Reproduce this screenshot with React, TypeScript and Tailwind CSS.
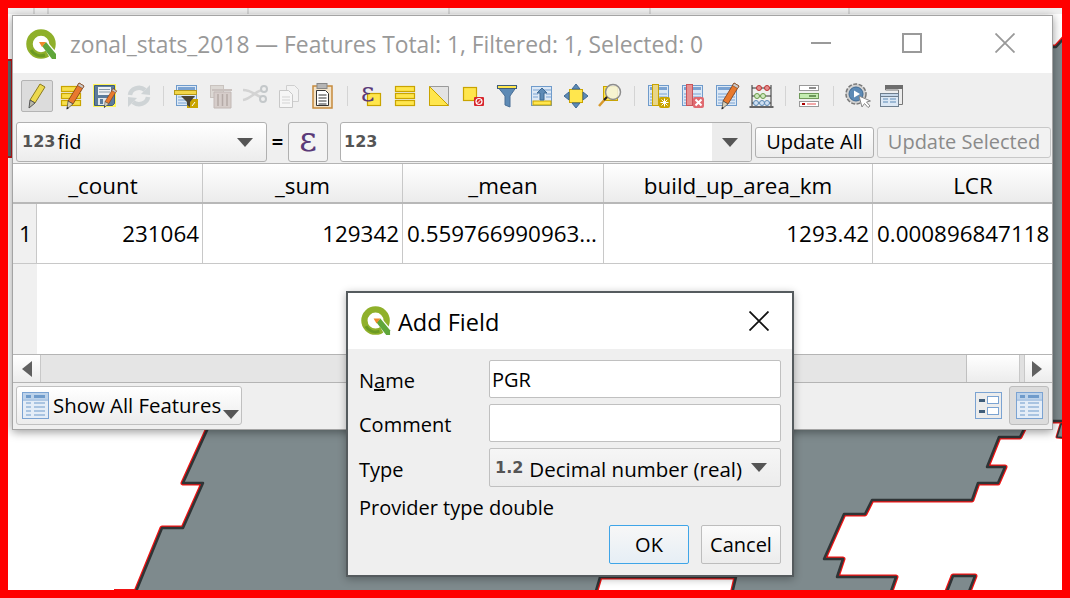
import React from "react";

const FONT = "font-['Open_Sans','Noto_Sans',sans-serif]";

function Logo({ size = 32 }: { size?: number }) {
  return (
    <svg width={size} height={size} viewBox="0 0 32 32" className="shrink-0">
      <circle cx="15" cy="15" r="11.500" fill="none" stroke="#8fb02a" strokeWidth="6.500" />
      <path d="M5 21a11.500 11.500 0 0 0 14 5" fill="none" stroke="#6b9a22" strokeWidth="3" />
      <path d="M15 13l4-3 12 14v7h-6z" fill="#fff" />
      <path d="M16 17l4-4 10 12v5h-4z" fill="#5fa63a" />
      <path d="M13 13l7 0-4 5z" fill="#ef8a2b" />
    </svg>
  );
}

function Pencil({ dx = 0, dy = 0, body = "#e8792e", line = "#7a3a12" }: { dx?: number; dy?: number; body?: string; line?: string }) {
  return (
    <g transform={`translate(${dx} ${dy})`}>
      <path d="M18 1l5 3-11 18-5-3z" fill={body} stroke={line} strokeWidth=".8" />
      <path d="M18 1l5 3-1.500 2.500-5-3z" fill="#c9c9c9" stroke={line} strokeWidth=".6" />
      <path d="M7 19l5 3-6 5z" fill="#d9d0b8" stroke="#444" strokeWidth=".7" />
      <path d="M6 25l2 1-2.500 1.500z" fill="#222" />
    </g>
  );
}

const TableBase = ({ x = 3, y = 4, w = 20, h = 20 }: { x?: number; y?: number; w?: number; h?: number }) => (
  <g>
    <rect x={x + 0.5} y={y + 0.5} width={w} height={h} fill="#dce8f5" stroke="#6f9bcb" />
    <rect x={x + 2} y={y + 2} width={w - 3} height="3" fill="#7ba3d2" />
    <path d={`M${x + 2} ${y + 9}h${w - 3}M${x + 2} ${y + 12}h${w - 3}M${x + 2} ${y + 15}h${w - 3}M${x + 2} ${y + 18}h${w - 3}`} stroke="#7ba3d2" />
  </g>
);

const I = ({ children }: { children: React.ReactNode }) => (
  <svg width="28" height="28" viewBox="0 0 28 28" className="overflow-visible">{children}</svg>
);

const icons: Record<string, React.ReactNode> = {
  pencil: (
    <I>
      <path d="M17 2l5 3-10 16-5-3z" fill="#ecd94f" stroke="#8a7a20" />
      <path d="M7 18l5 3-6 5z" fill="#b9b9a8" stroke="#555" />
    </I>
  ),
  editLayer: (
    <I>
      <g fill="#f7df4a" stroke="#c9a400" strokeWidth="1.200">
        <rect x="4.500" y="4.500" width="19" height="5" />
        <rect x="4.500" y="11.500" width="19" height="5" />
        <rect x="4.500" y="18.500" width="19" height="5" />
      </g>
      <Pencil dx={4} dy={0} />
    </I>
  ),
  save: (
    <I>
      <rect x="2" y="2" width="23" height="23" fill="#fff45a" />
      <path d="M3.500 3.500h20v18l-2 2h-18z" fill="#5c7c9c" stroke="#3f5d7a" />
      <rect x="7" y="5" width="13" height="8" fill="#eef1f4" />
      <path d="M8 7.500h11M8 10h11" stroke="#8a9aa8" />
      <rect x="7" y="16" width="10" height="7" fill="#dfe5ea" />
      <rect x="9" y="17" width="3" height="5" fill="#5c7c9c" />
      <g transform="translate(9 6) scale(.72)"><Pencil /></g>
    </I>
  ),
  reload: (
    <I>
      <path d="M5 13a9 8 0 0 1 15-5" fill="none" stroke="#cfd4d6" strokeWidth="4.500" />
      <path d="M16 12l9 1V3z" fill="#cfd4d6" />
      <path d="M23 15a9 8 0 0 1-15 5" fill="none" stroke="#cfd4d6" strokeWidth="4.500" />
      <path d="M12 16l-9-1v10z" fill="#cfd4d6" />
    </I>
  ),
  selectFilter: (
    <I>
      <TableBase x={3} y={3} w={20} h={20} />
      <rect x="1.500" y="8.500" width="22" height="4" fill="#f2d64a" stroke="#b59a1a" />
      <rect x="14" y="17" width="11" height="9" fill="#c9a400" />
      <path d="M8 14h14l-5 6v5l-3-2v-3z" fill="#4a4436" />
      <path d="M19 24l3-4" stroke="#fff" />
    </I>
  ),
  trash: (
    <I>
      <rect x="3.500" y="3.500" width="13" height="12" fill="#dcd8d4" stroke="#c9c3bf" />
      <path d="M5 8h20" stroke="#c9c1be" strokeWidth="2" />
      <path d="M7 10h17v16H7z" fill="#d6cdca" stroke="#c2b8b5" />
      <path d="M11 12v12M15.500 12v12M20 12v12" stroke="#b5aaa7" strokeWidth="1.500" />
    </I>
  ),
  scissors: (
    <I>
      <path d="M2 8c8 0 14 6 18 7M2 18c7-1 13-9 19-10" fill="none" stroke="#d3d3d3" strokeWidth="2.500" />
      <circle cx="23" cy="7" r="3" fill="none" stroke="#c4c8ca" strokeWidth="2" />
      <circle cx="22" cy="17" r="3" fill="none" stroke="#c4c8ca" strokeWidth="2" />
    </I>
  ),
  copy: (
    <I>
      <path d="M11.500 3.500h8l4 4v12h-12z" fill="#f2f2f2" stroke="#cfcfcf" />
      <path d="M4.500 8.500h9l4 4v13h-13z" fill="#f6f6f6" stroke="#c8c8c8" />
      <path d="M7 15h8M7 18h8M7 21h8" stroke="#d3d3d3" />
    </I>
  ),
  paste: (
    <I>
      <rect x="4" y="4" width="19" height="22" fill="#f3e3c8" stroke="#c68a3c" strokeWidth="1.500" />
      <path d="M7.500 8.500h9l3 3v12h-12z" fill="#fff" stroke="#333" />
      <rect x="8" y="1.500" width="10" height="5" fill="#b5b5b5" stroke="#888" />
      <path d="M9.500 13h8M9.500 16h8M9.500 19h8M9.500 22h8" stroke="#333" />
    </I>
  ),
  exprSelect: (
    <I>
      <rect x="9.500" y="11.500" width="13" height="12" fill="#ffe64d" stroke="#c9a400" strokeWidth="1.200" />
      <text x="3" y="19" fontSize="26" fill="#5a3a78" fontFamily="DejaVu Serif">ε</text>
    </I>
  ),
  selectAll: (
    <I>
      <g fill="#ffe64d" stroke="#c9a400" strokeWidth="1.200">
        <rect x="3.500" y="4.500" width="19" height="5" />
        <rect x="3.500" y="11.500" width="19" height="5" />
        <rect x="3.500" y="18.500" width="19" height="5" />
      </g>
    </I>
  ),
  invert: (
    <I>
      <path d="M3.500 4.500h19v19h-19z" fill="#e3e3e3" stroke="#9a9a9a" />
      <path d="M3.500 4.500l19 19h-19z" fill="#ffe64d" stroke="#c9a400" />
    </I>
  ),
  deselect: (
    <I>
      <rect x="3.500" y="5.500" width="13" height="13" fill="#ffe64d" stroke="#c9a400" strokeWidth="1.200" />
      <rect x="14" y="15" width="10" height="9" rx="1" fill="#d8262c" />
      <circle cx="19" cy="19.500" r="3" fill="none" stroke="#fff" strokeWidth="1.200" />
      <path d="M17 21.500l4-4" stroke="#fff" />
    </I>
  ),
  filter: (
    <I>
      <path d="M3 4h20l-7 10v11l-5-2v-9z" fill="#5d8ab5" stroke="#4a6f96" />
      <rect x="3.500" y="3.500" width="19" height="3" fill="#ffe64d" stroke="#3f5d7a" />
    </I>
  ),
  moveTop: (
    <I>
      <rect x="3.500" y="4.500" width="20" height="19" fill="#dce8f5" stroke="#6f9bcb" />
      <path d="M5 8h18M5 12h5M18 12h5M5 15h5M18 15h5" stroke="#7ba3d2" />
      <rect x="5" y="19" width="18" height="4" fill="#ffe64d" stroke="#c9a400" />
      <path d="M14 6l5 5h-3v7h-4v-7H9z" fill="#5d8ab5" stroke="#3f6a94" />
    </I>
  ),
  pan: (
    <I>
      <rect x="7.500" y="7.500" width="13" height="13" fill="#ffe64d" stroke="#c9a400" />
      <path d="M14 2l4 5h-8zM14 26l4-5h-8zM2 14l5-4v8zM26 14l-5-4v8z" fill="#5d8ab5" stroke="#3f6a94" />
    </I>
  ),
  zoomSel: (
    <I>
      <rect x="7.500" y="4.500" width="14" height="14" fill="#ffe64d" stroke="#c9a400" />
      <circle cx="17" cy="10" r="7.500" fill="#f4f4e8" fillOpacity=".85" stroke="#8d8d8d" strokeWidth="1.500" />
      <path d="M11 15l-8 9" stroke="#d89a2a" strokeWidth="2.500" />
      <path d="M11 15l-3 3" stroke="#222" strokeWidth="2" />
    </I>
  ),
  newField: (
    <I>
      <TableBase x={3} y={3} w={20} h={20} />
      <rect x="7.500" y="2.500" width="6" height="21" fill="#e8d688" stroke="#c9a400" />
      <rect x="14" y="15" width="11" height="11" rx="2" fill="#c9a400" />
      <path d="M19.500 16.500v8M15.500 20.500h8M16.500 17.500l6 6M22.500 17.500l-6 6" stroke="#fff" />
    </I>
  ),
  delField: (
    <I>
      <TableBase x={3} y={3} w={20} h={20} />
      <rect x="7.500" y="2.500" width="6" height="21" fill="#e78f90" stroke="#c9555a" />
      <rect x="14" y="15" width="11" height="11" rx="2" fill="#e06a70" />
      <path d="M16.500 17.500l6 6M22.500 17.500l-6 6" stroke="#fff" strokeWidth="2" />
    </I>
  ),
  editField: (
    <I>
      <TableBase x={3} y={3} w={20} h={20} />
      <g transform="translate(3 0)"><Pencil dx={0} dy={0} /></g>
    </I>
  ),
  abacus: (
    <I>
      <path d="M5 3v21M24 3v21" stroke="#333" />
      <path d="M5 6h19M5 14h19M5 21h19" stroke="#333" />
      <rect x="2.500" y="24" width="24" height="2" fill="#666" />
      <g fill="#e58d8d" stroke="#b33"><circle cx="12" cy="6" r="2.500" /><circle cx="20" cy="6" r="2.500" /></g>
      <g fill="#cfe8c0" stroke="#6a9a4a"><circle cx="10" cy="14" r="2.500" /><circle cx="16" cy="14" r="2.500" /></g>
      <g fill="#cfe0f2" stroke="#5d8ab5"><circle cx="9" cy="21" r="2.500" /><circle cx="15" cy="21" r="2.500" /><circle cx="20" cy="21" r="2.500" /></g>
    </I>
  ),
  rules: (
    <I>
      <rect x="4.500" y="3.500" width="19" height="5" fill="#fff" stroke="#999" />
      <path d="M14 6h7" stroke="#666" strokeWidth="1.500" />
      <rect x="4.500" y="11.500" width="19" height="5" fill="#c3ecb0" stroke="#6f9a5a" />
      <path d="M14 14h7" stroke="#4f7a3f" strokeWidth="1.500" />
      <rect x="4.500" y="19.500" width="19" height="5" fill="#fff" stroke="#999" />
      <rect x="7" y="21" width="3" height="2" fill="#a00" />
      <rect x="12" y="21" width="9" height="2" fill="#f2a8a8" />
    </I>
  ),
  action: (
    <I>
      <circle cx="13" cy="12" r="10" fill="#d0d0d0" stroke="#777" strokeWidth="1.500" strokeDasharray="4 1.500" />
      <circle cx="13" cy="12" r="7" fill="#5d8ab5" stroke="#3f6a94" />
      <path d="M11 8.500l6 3.500-6 3.500z" fill="#fff" />
      <path d="M16 14l3 11 2.500-3.500 3.500 4 2-1.500-3.500-4 4-1z" fill="#fff" stroke="#888" />
    </I>
  ),
  dock: (
    <I>
      <path d="M8.500 3.500h17v19h-4V8h-13z" fill="#ededed" stroke="#777" />
      <rect x="8" y="3" width="18" height="4" fill="#6d6d6d" />
      <rect x="3.500" y="11.500" width="18" height="13" fill="#dce8f5" stroke="#6f7f8f" />
      <rect x="3.500" y="11.500" width="18" height="3" fill="#c5d7ea" stroke="#6f7f8f" />
      <path d="M6 17h5M13 17h6M6 20h5M13 20h6" stroke="#5d8ab5" />
    </I>
  ),
};

const Sep = ({ w = "w-[14px]" }: { w?: string }) => (
  <div className={`${w} flex justify-center`}>
    <div className="w-px h-[20px] bg-[#d4d4d4]" />
  </div>
);

const Btn = ({ name, active }: { name: string; active?: boolean }) => (
  <div className="w-[34px] h-[32px] flex items-center justify-center">
    {active ? (
      <div className="w-[32px] h-[32px] rounded-[2px] border border-[#b4b4b4] bg-[#dcdcdc] flex items-center justify-center">
        {icons[name]}
      </div>
    ) : (
      icons[name]
    )}
  </div>
);

const Caret = ({ className = "" }: { className?: string }) => (
  <svg width="16" height="9" viewBox="0 0 16 9" className={className}>
    <path d="M0 0h16L8 9z" fill="#555" />
  </svg>
);

const TypeTag = ({ children }: { children: React.ReactNode }) => (
  <span className="font-['DejaVu_Sans',sans-serif] font-bold text-[16px] text-[#555]">{children}</span>
);

const TableIcon = ({ size = 27 }: { size?: number }) => (
  <svg width={size} height={size} viewBox="0 0 27 27" className="shrink-0">
    <rect x=".5" y=".5" width="26" height="26" fill="#e4edf7" stroke="#7ba3d2" />
    <rect x="1" y="1" width="25" height="6" fill="#bcd2ea" />
    <rect x="4" y="3" width="5" height="3" fill="#6f9bcb" />
    <rect x="12" y="3" width="11" height="3" fill="#6f9bcb" />
    <path d="M1 8h25" stroke="#7ba3d2" />
    <path d="M4 11h5M12 11h11M4 15h5M12 15h11M4 19h5M12 19h11M4 23h5M12 23h11" stroke="#6f9bcb" />
  </svg>
);

const cols = [
  { w: "w-[166px]", t: "_count", pad: "pr-[33px]" },
  { w: "w-[200px]", t: "_sum", pad: "" },
  { w: "w-[201px]", t: "_mean", pad: "" },
  { w: "w-[269px]", t: "build_up_area_km", pad: "" },
  { w: "w-[178px]", t: "LCR", pad: "pl-[22px]" },
];
const vals = ["231064", "129342", "0.559766990963...", "1293.42", "0.000896847118"];

const GREY = "M208 300L208 428L183 483L203 483L183 528L162 528L135 594L595 594L600 577L736 577L732 594L890 594L896 577L837 577L843 559L824 559L844 514L865 514L872 500L972 500L978 483L998 483L1005 467L987 467L999 437L1020 437L1028 421L1028 300Z";

export default function App() {
  return (
    <div className={`relative w-[1070px] h-[598px] overflow-hidden bg-white ${FONT} text-[20px] text-black`}>
      {/* map */}
      <svg width="1070" height="598" viewBox="0 0 1070 598" className="absolute inset-0">
        <rect x="0" y="0" width="1070" height="14" fill="#f0f0f0" />
        <path d="M34 0v14M48 0v14M248 0v14M449 0v14M650 0v14M849 0v14" stroke="#bdbdbd" />
        <g strokeLinejoin="round">
          <path d={GREY} fill="none" stroke="#f01414" strokeWidth="5" />
          <path d={GREY} fill="#7e8a8d" stroke="#2f3436" strokeWidth="2.500" />
          <path d="M946 594L953 576L975 576L968 594Z" fill="#7e8a8d" stroke="#f01414" strokeWidth="5" />
          <path d="M946 594L953 576L975 576L968 594Z" fill="#7e8a8d" stroke="#2f3436" strokeWidth="2.500" />
          <path d="M1040 47L1056 47L1066 36L1066 421L1040 421Z" fill="#7e8a8d" stroke="#f01414" strokeWidth="5" />
          <path d="M1040 47L1056 47L1066 36L1066 421L1040 421Z" fill="#7e8a8d" stroke="#2f3436" strokeWidth="2.500" />
          <path d="M1068 424L1061 424L1057 437L1068 438Z" fill="#7e8a8d" stroke="#f01414" strokeWidth="3" />
          <path d="M1068 424L1061 424L1057 437L1068 438Z" fill="#7e8a8d" stroke="#2f3436" strokeWidth="1.500" />
          <rect x="-6" y="60" width="18" height="97" fill="#5d6b6f" stroke="#c01818" strokeWidth="2" />
          <path d="M114 590h21" stroke="#f01414" strokeWidth="2" />
        </g>
      </svg>

      {/* attribute table window */}
      <div className="absolute left-[12px] top-[15px] w-[1041px] h-[415px] flex flex-col border border-[#a4a4a4] bg-[#efefef] shadow-[0_2px_9px_rgba(0,0,0,0.4)]">
        <div className="h-[57px] shrink-0 bg-white flex items-center pl-[13px]">
          <Logo />
          <span className="ml-[12px] mt-[2px] text-[22.85px] text-[#999] tracking-[-0.03px]">zonal_stats_2018 — Features Total: 1, Filtered: 1, Selected: 0</span>
          <div className="ml-auto flex items-center -mt-[4px]">
            <div className="w-[20px] h-[2px] bg-[#9a9a9a]" />
            <div className="ml-[71px] w-[20px] h-[20px] border-2 border-[#9a9a9a]" />
            <svg width="20" height="20" viewBox="0 0 20 20" className="ml-[73px] mr-[37px]">
              <path d="M.5.500l19 19M19.500.500l-19 19" stroke="#999" strokeWidth="1.800" />
            </svg>
          </div>
        </div>

        <div className="h-[48px] shrink-0 flex items-center pl-[7px] pb-[2px]">
          <Btn name="pencil" active />
          <Btn name="editLayer" />
          <Btn name="save" />
          <Btn name="reload" />
          <Sep />
          <Btn name="selectFilter" />
          <Btn name="trash" />
          <Btn name="scissors" />
          <Btn name="copy" />
          <Btn name="paste" />
          <Sep w="w-[15px]" />
          <Btn name="exprSelect" />
          <Btn name="selectAll" />
          <Btn name="invert" />
          <Btn name="deselect" />
          <Btn name="filter" />
          <Btn name="moveTop" />
          <Btn name="pan" />
          <Btn name="zoomSel" />
          <Sep w="w-[15px]" />
          <Btn name="newField" />
          <Btn name="delField" />
          <Btn name="editField" />
          <Btn name="abacus" />
          <Sep />
          <Btn name="rules" />
          <Sep />
          <Btn name="action" />
          <Btn name="dock" />
        </div>

        <div className="h-[42px] shrink-0 flex items-center pl-[3px]">
          <div className="w-[251px] h-[40px] rounded-[3px] border border-[#b0b0b0] bg-gradient-to-b from-white to-[#ececec] flex items-center pl-[5px] pr-[13px]">
            <TypeTag>123</TypeTag>
            <span className="ml-[2px] leading-none">fid</span>
            <Caret className="ml-auto" />
          </div>
          <span className="w-[21px] text-center font-bold leading-none">=</span>
          <div className="w-[40px] h-[40px] rounded-[3px] border border-[#b0b0b0] bg-[#f3f3f3] flex items-center justify-center">
            <span className="font-['DejaVu_Serif',serif] text-[34px] leading-none text-[#5a3a78] -mt-[6px]">ε</span>
          </div>
          <div className="ml-[12px] w-[412px] h-[40px] rounded-[3px] border border-[#b0b0b0] bg-white flex items-center pl-[3px]">
            <TypeTag>123</TypeTag>
            <div className="ml-auto w-[39px] h-full bg-[#ececec] flex items-center justify-center rounded-r-[3px] pr-[3px]">
              <Caret />
            </div>
          </div>
          <div className="ml-[3px] w-[119px] h-[31px] rounded-[3px] border border-[#b0b0b0] bg-gradient-to-b from-white to-[#ececec] flex items-center justify-center">Update All</div>
          <div className="ml-[3px] w-[174px] h-[31px] rounded-[3px] border border-[#c8c8c8] bg-[#f2f2f2] flex items-center justify-center text-[#8a8a8a]">Update Selected</div>
        </div>

        <div className="flex-1 min-h-0 flex flex-col border-t border-[#b4b4b4] bg-white">
          <div className="h-[40px] shrink-0 flex border-b-2 border-[#b8b8b8] bg-gradient-to-b from-white to-[#ececec] text-[22.4px]">
            <div className="w-[24px] shrink-0" />
            {cols.map((c, i) => (
              <div key={c.t} className={`${c.w} ${c.pad} shrink-0 flex items-center justify-center pt-[6px] ${i < 4 ? "border-r border-[#c8c8c8]" : ""}`}>
                <span className="leading-none">{c.t}</span>
              </div>
            ))}
          </div>
          <div className="h-[60px] shrink-0 flex border-b border-[#c8c8c8] text-[22.4px]">
            <div className="w-[24px] shrink-0 bg-[#f0f0f0] border-r border-[#c8c8c8] flex items-center pl-[6px]">1</div>
            {cols.map((c, i) => (
              <div key={c.t} className={`${c.w} shrink-0 flex items-center ${i === 0 || i === 1 || i === 3 ? "justify-end pr-[3px]" : "pl-[4px]"} ${i < 4 ? "border-r border-[#c8c8c8]" : ""} overflow-hidden whitespace-nowrap`}>{vals[i]}</div>
            ))}
          </div>
          <div className="flex-1 min-h-0 flex">
            <div className="w-[24px] bg-[#f0f0f0]" />
          </div>
          <div className="h-[29px] shrink-0 flex border-t border-b border-[#b4b4b4] bg-[#e5e5e5]">
            <div className="w-[28px] bg-gradient-to-b from-white to-[#ececec] border-r border-[#c8c8c8] flex items-center justify-center">
              <svg width="10" height="16" viewBox="0 0 10 16"><path d="M10 0v16L0 8z" fill="#606060" /></svg>
            </div>
            <div className="flex-1" />
            <div className="w-[53px] bg-gradient-to-b from-white to-[#ececec] border-l border-[#c0c0c0]" />
            <div className="w-[5px] bg-[#e0e0e0] border-l border-[#c8c8c8]" />
            <div className="w-[28px] pr-[3px] bg-gradient-to-b from-white to-[#ececec] border-l border-[#c8c8c8] flex items-center justify-center">
              <svg width="10" height="16" viewBox="0 0 10 16"><path d="M0 0v16l10-8z" fill="#606060" /></svg>
            </div>
          </div>
          <div className="h-[46px] shrink-0 bg-[#efefef] flex items-center pl-[3px] pr-[3px] pb-[2px]">
            <div className="w-[226px] h-[39px] rounded-[3px] border border-[#c0c0c0] bg-gradient-to-b from-white to-[#ececec] flex items-center pl-[5px] relative">
              <TableIcon />
              <span className="ml-[4px] leading-none text-[20.4px]">Show All Features</span>
              <Caret className="absolute right-[2px] bottom-[5px]" />
            </div>
            <div className="ml-auto mr-[7px]">
              <svg width="27" height="27" viewBox="0 0 27 27">
                <rect x=".5" y=".5" width="26" height="26" fill="#ececec" stroke="#7ba3d2" />
                <rect x="4" y="7" width="6" height="3" fill="#3f5d7a" />
                <rect x="4" y="18" width="6" height="3" fill="#3f5d7a" />
                <rect x="12.500" y="4.500" width="11" height="7" fill="#fff" stroke="#7ba3d2" />
                <rect x="12.500" y="15.500" width="11" height="7" fill="#fff" stroke="#7ba3d2" />
              </svg>
            </div>
            <div className="w-[40px] h-[39px] rounded-[3px] border border-[#bdbdbd] bg-[#dcdcdc] flex items-center justify-center">
              <TableIcon />
            </div>
          </div>
        </div>
      </div>

      {/* dialog */}
      <div className="absolute left-[346px] top-[291px] w-[448px] h-[286px] flex flex-col border-2 border-[#555b5e] bg-[#efefef] shadow-[0_2px_8px_rgba(0,0,0,0.3)]">
        <div className="h-[56px] shrink-0 bg-white flex items-center pl-[13px]">
          <Logo size={31} />
          <span className="ml-[6px] mt-[3px] text-[23.5px] leading-none">Add Field</span>
          <svg width="20" height="20" viewBox="0 0 20 20" className="ml-auto mr-[23px]">
            <path d="M.5.500l19 19M19.500.500l-19 19" stroke="#111" strokeWidth="1.800" />
          </svg>
        </div>
        <div className="flex-1 min-h-0 flex flex-col pt-[11px] pl-[11px] pr-[11px]">
          <div className="grid grid-cols-[130px_292px] gap-y-[6px] items-center">
            <span className="leading-none mt-[4px]">N<span className="underline">a</span>me</span>
            <div className="h-[38px] rounded-[2px] border border-[#c0c0c0] bg-white flex items-center pl-[2px] pt-[2px]">PGR</div>
            <span className="leading-none mt-[4px]">Comment</span>
            <div className="h-[38px] rounded-[2px] border border-[#c0c0c0] bg-white" />
            <span className="leading-none mt-[4px]">Type</span>
            <div className="h-[39px] rounded-[2px] border border-[#c0c0c0] bg-gradient-to-b from-[#f6f6f6] to-[#ececec] flex items-center pl-[5px] pr-[13px]">
              <TypeTag>1.2</TypeTag>
              <span className="ml-[6px] leading-none mt-[3px] text-[20.5px]">Decimal number (real)</span>
              <Caret className="ml-auto" />
            </div>
          </div>
          <div className="mt-[7px] h-[27px] flex items-center">Provider type double</div>
          <div className="flex justify-end mt-[4px] gap-[12px]">
            <div className="w-[80px] h-[39px] rounded-[2px] border border-[#3fa5e8] bg-gradient-to-b from-[#f7f7f7] to-[#e6eef5] flex items-center justify-center">OK</div>
            <div className="w-[80px] h-[39px] rounded-[2px] border border-[#bdbdbd] bg-gradient-to-b from-[#fbfbfb] to-[#ececec] flex items-center justify-center">Cancel</div>
          </div>
        </div>
      </div>

      {/* red frame */}
      <div className="absolute inset-0 border-[8px] border-[#ff0000] pointer-events-none" />
    </div>
  );
}
